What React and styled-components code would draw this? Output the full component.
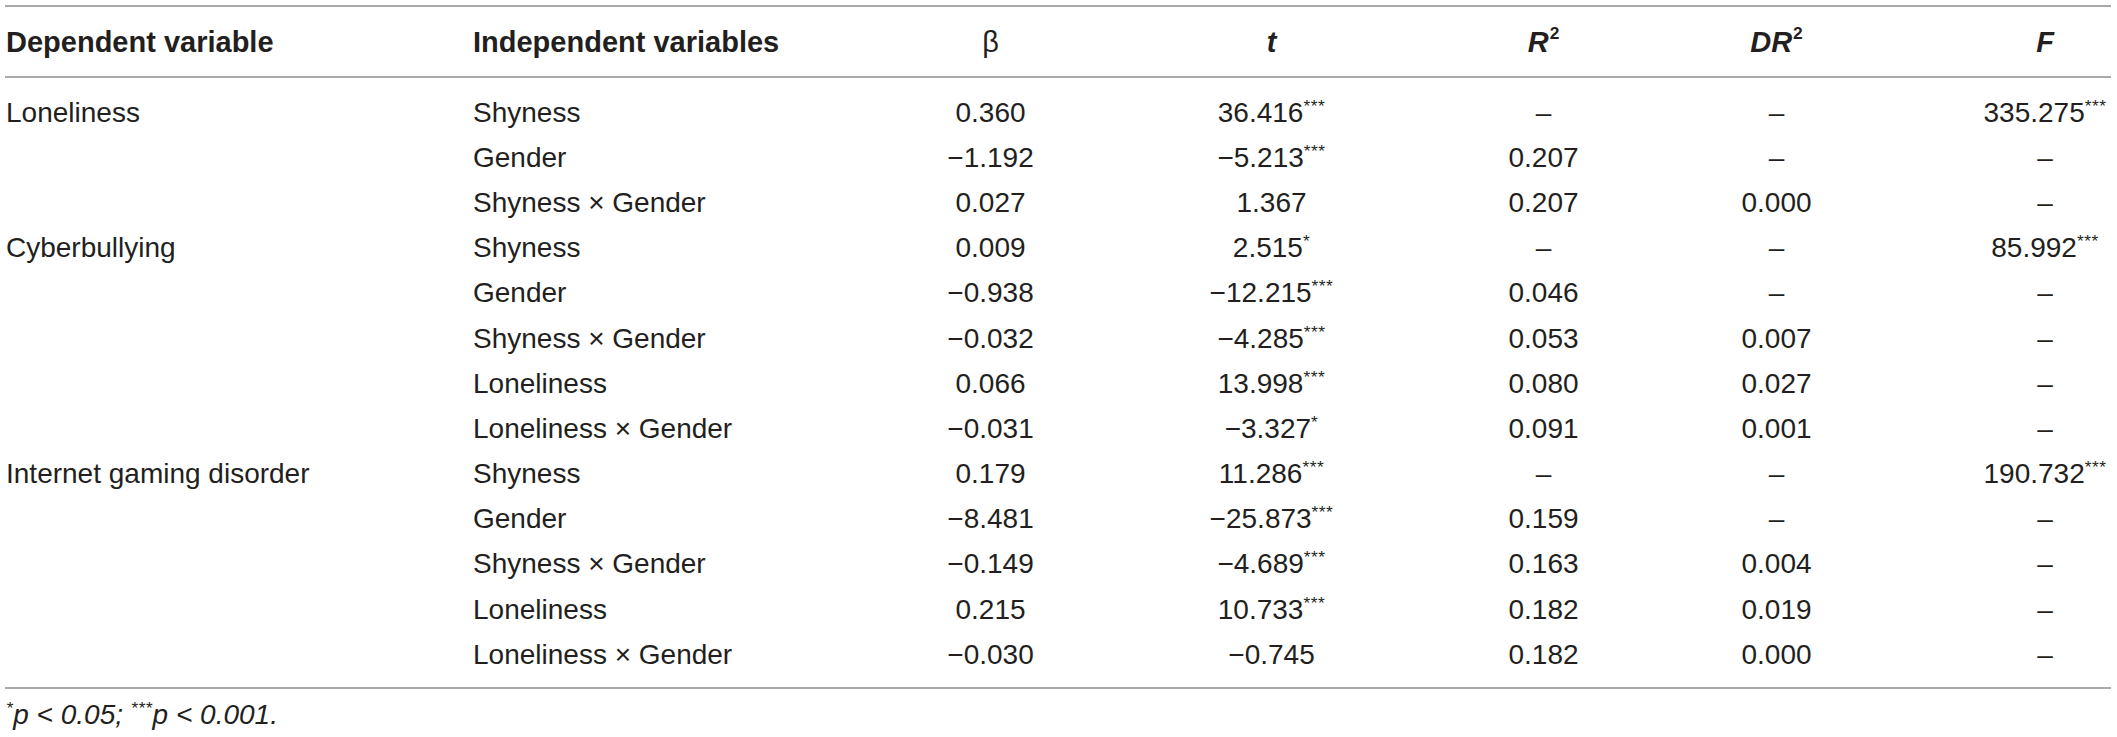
import React from "react";
import styled, { createGlobalStyle } from "styled-components";

const GlobalStyle = createGlobalStyle`
	html, body {
		margin: 0;
		padding: 0;
		background: #fff;
		overflow: hidden;
	}
	body {
		font-family: "Liberation Sans", Arial, Helvetica, sans-serif;
		color: #231f20;
	}
`;

// column tracks, measured from the table: label, label, beta, t, R2, DR2, F
const COLUMNS = "467px 398px 240px 322px 222px 244px 213px";

const rows = [
	{ dep: "Loneliness", ind: "Shyness", b: "0.360", t: "36.416", tSig: "***", r2: "–", dr2: "–", f: "335.275", fSig: "***" },
	{ ind: "Gender", b: "−1.192", t: "−5.213", tSig: "***", r2: "0.207", dr2: "–", f: "–" },
	{ ind: "Shyness × Gender", b: "0.027", t: "1.367", r2: "0.207", dr2: "0.000", f: "–" },
	{ dep: "Cyberbullying", ind: "Shyness", b: "0.009", t: "2.515", tSig: "*", r2: "–", dr2: "–", f: "85.992", fSig: "***" },
	{ ind: "Gender", b: "−0.938", t: "−12.215", tSig: "***", r2: "0.046", dr2: "–", f: "–" },
	{ ind: "Shyness × Gender", b: "−0.032", t: "−4.285", tSig: "***", r2: "0.053", dr2: "0.007", f: "–" },
	{ ind: "Loneliness", b: "0.066", t: "13.998", tSig: "***", r2: "0.080", dr2: "0.027", f: "–" },
	{ ind: "Loneliness × Gender", b: "−0.031", t: "−3.327", tSig: "*", r2: "0.091", dr2: "0.001", f: "–" },
	{ dep: "Internet gaming disorder", ind: "Shyness", b: "0.179", t: "11.286", tSig: "***", r2: "–", dr2: "–", f: "190.732", fSig: "***" },
	{ ind: "Gender", b: "−8.481", t: "−25.873", tSig: "***", r2: "0.159", dr2: "–", f: "–" },
	{ ind: "Shyness × Gender", b: "−0.149", t: "−4.689", tSig: "***", r2: "0.163", dr2: "0.004", f: "–" },
	{ ind: "Loneliness", b: "0.215", t: "10.733", tSig: "***", r2: "0.182", dr2: "0.019", f: "–" },
	{ ind: "Loneliness × Gender", b: "−0.030", t: "−0.745", r2: "0.182", dr2: "0.000", f: "–" },
];

function Value({ value, sig }) {
	return (
		<>
			{value}
			{sig && <Stars>{sig}</Stars>}
		</>
	);
}

function App() {
	return (
		<Page>
			<GlobalStyle />
			<Table>
				<HeadRow>
					<HeadCell>Dependent variable</HeadCell>
					<HeadCell>Independent variables</HeadCell>
					<HeadCell $center $plain>β</HeadCell>
					<HeadCell $center>
						<em>t</em>
					</HeadCell>
					<HeadCell $center>
						<em>R</em>
						<Sq>2</Sq>
					</HeadCell>
					<HeadCell $center>
						<em>DR</em>
						<Sq>2</Sq>
					</HeadCell>
					<HeadCell $center $offset={81}>
						<em>F</em>
					</HeadCell>
				</HeadRow>
				<Body>
					{rows.map((r, i) => (
						<Row key={i}>
							<Cell>{r.dep || ""}</Cell>
							<Cell>{r.ind}</Cell>
							<Cell $center>{r.b}</Cell>
							<Cell $center>
								<Value value={r.t} sig={r.tSig} />
							</Cell>
							<Cell $center>{r.r2}</Cell>
							<Cell $center>{r.dr2}</Cell>
							<Cell $center $offset={81}>
								<Value value={r.f} sig={r.fSig} />
							</Cell>
						</Row>
					))}
				</Body>
			</Table>
			<Footnote>
				<Stars>*</Stars>p &lt; 0.05; <Stars>***</Stars>p &lt; 0.001.
			</Footnote>
		</Page>
	);
}

const Page = styled.div`
	width: 2117px;
	padding: 5px 6px 0 5px;
	box-sizing: border-box;
`;
const Table = styled.div`
	border-top: 2px solid #a7a9ac;
	border-bottom: 2px solid #a7a9ac;
`;
const HeadRow = styled.div`
	display: grid;
	grid-template-columns: ${COLUMNS};
	height: 69px;
	align-items: center;
	border-bottom: 2px solid #a7a9ac;
`;
const HeadCell = styled.div`
	font-size: 29px;
	font-weight: ${(p) => (p.$plain ? 400 : 700)};
	line-height: 36px;
	text-align: ${(p) => (p.$center ? "center" : "left")};
	padding-left: ${(p) => (p.$offset ? `${p.$offset}px` : "1px")};
	white-space: nowrap;

	em {
		font-style: italic;
	}
`;
const Sq = styled.sup`
	font-size: 0.6em;
	font-style: normal;
	font-weight: 700;
	line-height: 0;
	vertical-align: 0.7em;
	margin-left: 1px;
`;
const Body = styled.div`
	padding: 12px 0 10px;
`;
const Row = styled.div`
	display: grid;
	grid-template-columns: ${COLUMNS};
	height: 45.2px;
	align-items: center;
`;
const Cell = styled.div`
	font-size: 28px;
	line-height: 36px;
	text-align: ${(p) => (p.$center ? "center" : "left")};
	padding-left: ${(p) => (p.$offset ? `${p.$offset}px` : "1px")};
	white-space: nowrap;
`;
const Stars = styled.span`
	font-size: 0.62em;
	line-height: 0;
	vertical-align: 0.55em;
	letter-spacing: 0.5px;
`;
const Footnote = styled.p`
	margin: 8px 0 0 1px;
	font-size: 28px;
	line-height: 36px;
	font-style: italic;
`;

export default App;
